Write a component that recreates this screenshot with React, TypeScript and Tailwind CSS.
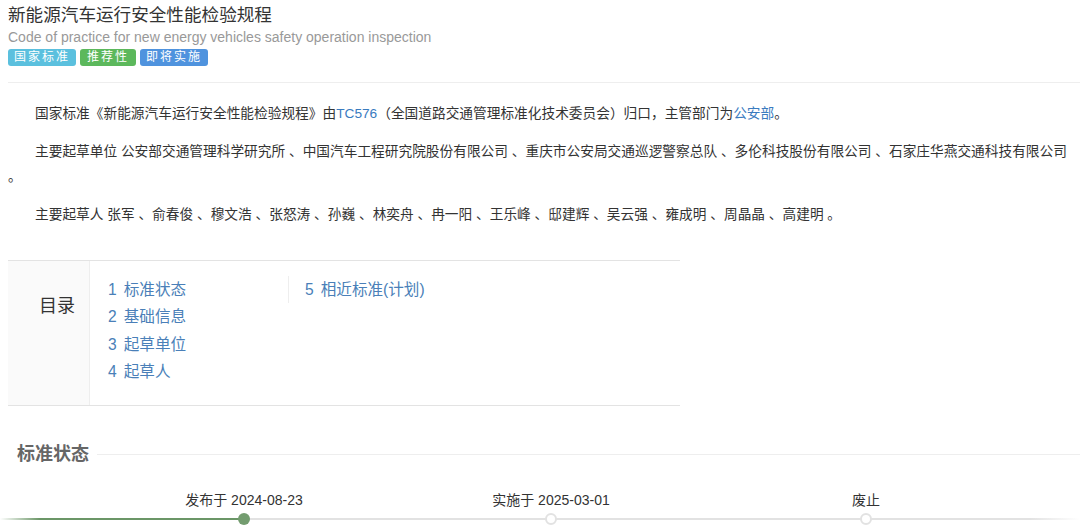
const toc: [number, string][][] = [
  [
    [1, "标准状态"],
    [2, "基础信息"],
    [3, "起草单位"],
    [4, "起草人"],
  ],
  [[5, "相近标准(计划)"]],
];

const milestones = [
  { label: "发布于 2024-08-23", done: true, shift: "ml-[156px]" },
  { label: "实施于 2025-03-01", done: false, shift: "ml-[147px]" },
  { label: "废止", done: false, shift: "ml-[155px]" },
];

export default function App() {
  return (
    <main className="min-h-[530px] bg-white pl-2 font-['Liberation_Sans','Noto_Sans_CJK_SC',sans-serif] text-[#333]">
      <header className="border-b border-[#eee] pb-[16px] pt-[3px]">
        <h1 className="text-[17.6px] leading-[24px] text-[#333]">新能源汽车运行安全性能检验规程</h1>
        <p className="text-[14px] leading-[20px] text-[#999]">
          Code of practice for new energy vehicles safety operation inspection
        </p>
        <div className="mt-[2px] flex gap-[4px]">
          <span className="rounded-[3px] bg-[#5bc0de] px-[6px] text-[12px] leading-[17px] tracking-[2px] text-white">国家标准</span>
          <span className="rounded-[3px] bg-[#5cb85c] px-[7px] text-[12px] leading-[17px] tracking-[2px] text-white">推荐性</span>
          <span className="rounded-[3px] bg-[#4f93de] px-[6px] text-[12px] leading-[17px] tracking-[2px] text-white">即将实施</span>
        </div>
      </header>

      <section className="mt-[18px] pr-2 text-[13.7px] leading-[25px]">
        <p className="mb-[13px] indent-[27px]">
          国家标准《新能源汽车运行安全性能检验规程》由<span className="text-[#3a7bbf]">TC576</span>
          （全国道路交通管理标准化技术委员会）归口，主管部门为<span className="text-[#3a7bbf]">公安部</span>。
        </p>
        <p className="mb-[13px] indent-[27px]">
          主要起草单位 公安部交通管理科学研究所 、中国汽车工程研究院股份有限公司 、重庆市公安局交通巡逻警察总队 、多伦科技股份有限公司 、石家庄华燕交通科技有限公司 。
        </p>
        <p className="indent-[27px]">
          主要起草人 张军 、俞春俊 、穆文浩 、张怒涛 、孙巍 、林奕舟 、冉一阳 、王乐峰 、邸建辉 、吴云强 、雍成明 、周晶晶 、高建明 。
        </p>
      </section>

      <section className="mt-[33px] flex w-[672px] border-y border-[#e3e3e3]">
        <div className="w-[82px] border-r border-[#eee] bg-[#fafafa] pr-[14px] pt-[33px] text-right text-[18px] leading-[24px] text-[#333]">
          目录
        </div>
        <div className="flex pb-[20px] pt-[15px]">
          {toc.map((col, i) => (
            <ul
              key={i}
              className={i === 0 ? "w-[198px] pl-[18px]" : "self-start border-l border-[#eee] pl-[16px]"}
            >
              {col.map(([n, t]) => (
                <li key={n} className="text-[15.6px] leading-[27.3px] text-[#4a7fb8]">
                  <span className="mr-[7px]">{n}</span>
                  {t}
                </li>
              ))}
            </ul>
          ))}
        </div>
      </section>

      <section className="mt-[36px]">
        <div className="flex items-center">
          <h2 className="pl-[9px] pr-[8px] text-[18px] font-bold leading-[24px] text-[#666]">标准状态</h2>
          <div className="h-px flex-1 bg-[#eee]" />
        </div>

        <div className="mt-[24px] flex">
          {milestones.map((m) => (
            <div key={m.label} className={`w-[160px] text-center text-[14px] leading-[20px] text-[#333] ${m.shift}`}>
              {m.label}
            </div>
          ))}
        </div>
        <div className="-ml-2 mt-[8px] h-[2px] bg-[linear-gradient(90deg,#ffffff_0px,#6b9667_40px,#6b9667_244px,#e2e2e2_244px,#e2e2e2_1030px,#ffffff_1080px)]" />
        <div className="-mt-[7px] flex">
          {milestones.map((m) => (
            <div key={m.label} className={`flex w-[160px] justify-center ${m.shift}`}>
              <span
                className={
                  m.done
                    ? "h-[12px] w-[12px] rounded-full bg-[#739c6f]"
                    : "h-[12px] w-[12px] rounded-full border-2 border-[#e2e2e2] bg-white"
                }
              />
            </div>
          ))}
        </div>
      </section>
    </main>
  );
}
